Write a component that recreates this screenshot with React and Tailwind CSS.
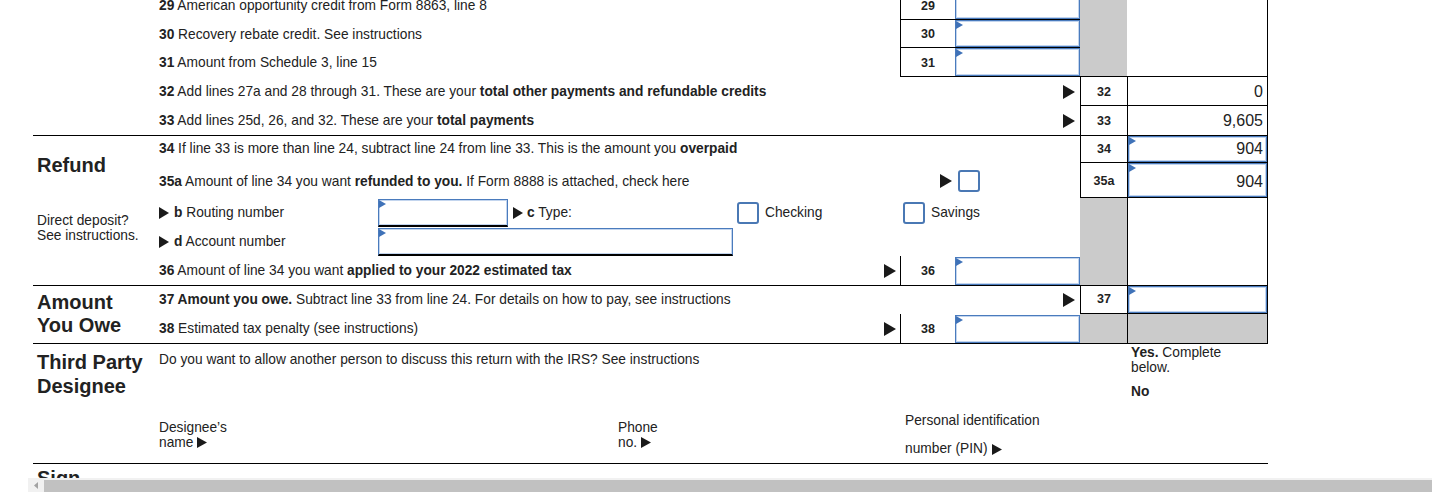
import React from "react";

const Arrow = ({ w = 12, h = 14, className = "" }) => (
  <svg width={w} height={h} viewBox="0 0 12 14" preserveAspectRatio="none" className={`shrink-0 ${className}`}>
    <path d="M0 0L12 7L0 14Z" fill="#1a1a1a" />
  </svg>
);

const Flag = () => (
  <svg width="7" height="8" viewBox="0 0 7 8" className="absolute left-0 top-0">
    <path d="M0 0L7 4L0 8Z" fill="#3f72b8" />
  </svg>
);

const Box = ({ children, className = "" }) => (
  <div
    className={`relative h-full border border-[#4a7bbd] shadow-[inset_0_0_0_1px_#c3d5ee] bg-white flex items-center justify-end pr-[3px] text-[16px] ${className}`}
  >
    <Flag />
    {children}
  </div>
);

const Check = () => (
  <div className="w-[22px] h-[22px] rounded-[3px] border-2 border-[#4a78b4] bg-white shrink-0" />
);

const Num = ({ children, className = "" }) => (
  <div className={`flex items-center justify-center font-bold text-[12.5px] ${className}`}>{children}</div>
);

const R = "grid grid-cols-[745px_55px_125px_47px_141px]";

export default function App() {
  return (
    <div className="h-[492px] w-full bg-white flex flex-col overflow-hidden font-['Liberation_Sans',Arial,sans-serif] text-[13.75px] text-[#222]">
      <div className="h-[478px] overflow-hidden shrink-0">
        <div className="ml-[33px] w-[1235px]">
          {/* Top section: lines 29-33 */}
          <section className="flex border-b border-black -mt-[9px]">
            <div className="w-[122px] shrink-0" />
            <div className="w-[1113px]">
              <div className={`${R} h-[29px]`}>
                <div className="flex items-center pl-1 pt-[2px]"><span><b>29</b> American opportunity credit from Form 8863, line 8</span></div>
                <Num className="border-l border-b border-black pt-[2px]">29</Num>
                <div className="border-b border-black"><Box /></div>
                <div className="bg-[#cbcbcb]" />
                <div className="border-r border-black" />
              </div>
              <div className={`${R} h-[28px]`}>
                <div className="flex items-center pl-1 pt-[2px]"><span><b>30</b> Recovery rebate credit. See instructions</span></div>
                <Num className="border-l border-b border-black pt-[2px]">30</Num>
                <div className="border-b border-black"><Box /></div>
                <div className="bg-[#cbcbcb]" />
                <div className="border-r border-black" />
              </div>
              <div className={`${R} h-[29px]`}>
                <div className="flex items-center pl-1 pt-[2px]"><span><b>31</b> Amount from Schedule 3, line 15</span></div>
                <Num className="border-l border-b border-black pt-[2px]">31</Num>
                <div className="border-b border-black"><Box /></div>
                <div className="bg-[#cbcbcb] border-b border-black" />
                <div className="border-r border-b border-black" />
              </div>
              <div className={`${R} h-[29px]`}>
                <div className="col-span-3 flex items-center justify-between pl-1 pr-[5px]">
                  <span className="pt-[2px]"><b>32</b> Add lines 27a and 28 through 31. These are your <b>total other payments and refundable credits</b></span>
                  <Arrow />
                </div>
                <Num className="border-l border-b border-black pt-[2px]">32</Num>
                <div className="border-l border-r border-b border-black flex items-center justify-end pr-[4px] pt-[2px] text-[16px]">0</div>
              </div>
              <div className={`${R} h-[29px]`}>
                <div className="col-span-3 flex items-center justify-between pl-1 pr-[5px]">
                  <span className="pt-[2px]"><b>33</b> Add lines 25d, 26, and 32. These are your <b>total payments</b></span>
                  <Arrow />
                </div>
                <Num className="border-l border-black pt-[2px]">33</Num>
                <div className="border-l border-r border-black flex items-center justify-end pr-[4px] text-[16px]">9,605</div>
              </div>
            </div>
          </section>

          {/* Refund section */}
          <section className="flex border-b border-black">
            <div className="w-[122px] shrink-0 flex flex-col">
              <div className="h-[58px] flex items-center pl-1 text-[20px] font-bold">Refund</div>
              <div className="h-[66px] flex items-center pl-1 pt-[2px] leading-[15px]">
                <span>Direct deposit?<br />See instructions.</span>
              </div>
            </div>
            <div className="w-[1113px]">
              <div className={`${R} h-[27px]`}>
                <div className="col-span-3 flex items-center pl-1">
                  <span><b>34</b> If line 33 is more than line 24, subtract line 24 from line 33. This is the amount you <b>overpaid</b></span>
                </div>
                <Num className="border-l border-b border-black">34</Num>
                <div className="border-l border-r border-b border-black"><Box>904</Box></div>
              </div>
              <div className={`${R} h-[35px]`}>
                <div className="flex items-center pl-1 pt-[4px]">
                  <span><b>35a</b> Amount of line 34 you want <b>refunded to you.</b> If Form 8888 is attached, check here</span>
                </div>
                <div className="flex items-center justify-end pr-[3px]"><Arrow /></div>
                <div className="flex items-center pl-[3px]"><Check /></div>
                <Num className="border-l border-b border-black pt-[2px]">35a</Num>
                <div className="border-l border-r border-b border-black"><Box className="pt-[3px]">904</Box></div>
              </div>
              <div className={`${R} h-[29px]`}>
                <div className="col-span-3 flex items-stretch">
                  <div className="w-[223px] shrink-0 pl-1 flex items-center gap-[5px]">
                    <Arrow w={10} h={12} />
                    <span className="pt-[2px]"><b>b</b> Routing number</span>
                  </div>
                  <div className="w-[130px] shrink-0 mt-[1px]"><Box className="border-b-black border-b-2" /></div>
                  <div className="w-[229px] shrink-0 pl-[5px] flex items-center gap-[4px]">
                    <Arrow w={10} h={12} />
                    <span className="pt-[2px]"><b>c</b> Type:</span>
                  </div>
                  <div className="w-[166px] shrink-0 flex items-center gap-[6px]">
                    <Check />
                    <span className="pt-[2px]">Checking</span>
                  </div>
                  <div className="flex items-center gap-[6px]">
                    <Check />
                    <span className="pt-[2px]">Savings</span>
                  </div>
                </div>
                <div className="bg-[#cbcbcb]" />
                <div className="border-l border-r border-black" />
              </div>
              <div className={`${R} h-[29px]`}>
                <div className="col-span-3 flex items-stretch">
                  <div className="w-[223px] shrink-0 pl-1 flex items-center gap-[5px]">
                    <Arrow w={10} h={12} />
                    <span className="pt-[2px]"><b>d</b> Account number</span>
                  </div>
                  <div className="w-[355px] shrink-0 mt-[1px]"><Box className="border-b-black border-b-2" /></div>
                </div>
                <div className="bg-[#cbcbcb]" />
                <div className="border-l border-r border-black" />
              </div>
              <div className={`${R} h-[29px]`}>
                <div className="flex items-center justify-between pl-1 pr-[4px]">
                  <span className="pt-[2px]"><b>36</b> Amount of line 34 you want <b>applied to your 2022 estimated tax</b></span>
                  <Arrow />
                </div>
                <Num className="border-l border-black pt-[2px]">36</Num>
                <div className="pt-[1px]"><Box /></div>
                <div className="bg-[#cbcbcb]" />
                <div className="border-l border-r border-black" />
              </div>
            </div>
          </section>

          {/* Amount You Owe */}
          <section className="flex border-b border-black">
            <div className="w-[122px] shrink-0 flex items-center pl-1 pb-[2px] text-[20px] font-bold leading-[23px]">
              <span>Amount<br />You Owe</span>
            </div>
            <div className="w-[1113px]">
              <div className={`${R} h-[28px]`}>
                <div className="col-span-3 flex items-center justify-between pl-1 pr-[5px]">
                  <span><b>37 Amount you owe.</b> Subtract line 33 from line 24. For details on how to pay, see instructions</span>
                  <Arrow />
                </div>
                <Num className="border-l border-b border-black">37</Num>
                <div className="border-l border-r border-b border-black"><Box /></div>
              </div>
              <div className={`${R} h-[29px]`}>
                <div className="flex items-center justify-between pl-1 pr-[4px]">
                  <span className="pt-[2px]"><b>38</b> Estimated tax penalty (see instructions)</span>
                  <Arrow />
                </div>
                <Num className="border-l border-black pt-[2px]">38</Num>
                <div className="pt-[1px]"><Box /></div>
                <div className="bg-[#cbcbcb]" />
                <div className="bg-[#cbcbcb] border-l border-r border-black" />
              </div>
            </div>
          </section>

          {/* Third Party Designee */}
          <section className="flex border-b border-black">
            <div className="w-[122px] shrink-0 pl-1 pt-[6px] text-[20px] font-bold leading-[24px]">
              Third Party<br />Designee
            </div>
            <div className="w-[1113px] flex flex-col">
              <div className="grid grid-cols-[972px_141px] h-[62px]">
                <div className="pl-1 pt-[8px] leading-[16px]">
                  Do you want to allow another person to discuss this return with the IRS? See instructions
                </div>
                <div className="pl-1 pt-[1px] leading-[15px]">
                  <div><b>Yes.</b> Complete<br />below.</div>
                  <div className="mt-[9px] font-bold">No</div>
                </div>
              </div>
              <div className="grid grid-cols-[459px_287px_367px] h-[57px]">
                <div className="pl-1 pt-[14px] leading-[15px]">
                  Designee’s<br />
                  <span className="inline-flex items-center gap-[4px]">name <Arrow w={10} h={11} /></span>
                </div>
                <div className="pl-1 pt-[14px] leading-[15px]">
                  Phone<br />
                  <span className="inline-flex items-center gap-[4px]">no. <Arrow w={10} h={11} /></span>
                </div>
                <div className="pl-1 pt-[7px] leading-[16px]">
                  <div>Personal identification</div>
                  <div className="mt-[12px] flex items-center gap-[4px]">number (PIN) <Arrow w={10} h={11} /></div>
                </div>
              </div>
            </div>
          </section>

          {/* Sign */}
          <section className="flex">
            <div className="w-[122px] shrink-0 pl-1 pt-[2px] text-[20px] font-bold leading-[24px]">Sign</div>
          </section>
        </div>
      </div>

      {/* horizontal scrollbar */}
      <div className="h-[14px] ml-[28px] flex bg-[#f1f1f1] shrink-0">
        <div className="w-[16px] flex items-center justify-center">
          <svg width="4" height="7" viewBox="0 0 4 7"><path d="M4 0L0 3.5L4 7Z" fill="#a3a3a3" /></svg>
        </div>
        <div className="flex-1 mt-[2px] bg-[#c1c1c1]" />
      </div>
    </div>
  );
}
